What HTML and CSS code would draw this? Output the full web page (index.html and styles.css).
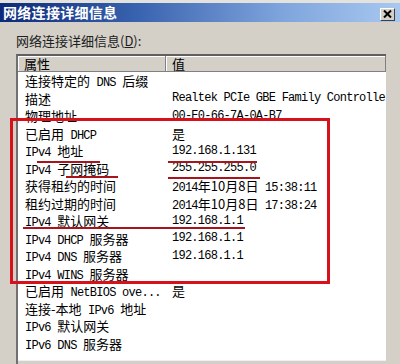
FILE: index.html
```html
<!DOCTYPE html>
<html lang="zh-CN">
<head>
	<meta charset="UTF-8">
	<title>网络连接详细信息</title>
	<link rel="stylesheet" href="styles.css">
</head>
<body>
	<div class="win">
		<header class="titlebar">
			<span class="title">网络连接详细信息</span>
			<span class="close">
				<svg width="9" height="8" viewBox="0 0 9 8"><path d="M1 0.5 L8 7.5 M8 0.5 L1 7.5" stroke="#000" stroke-width="2"/></svg>
			</span>
		</header>
		<div class="content">
			<div class="label">网络连接详细信息(<u>D</u>):</div>
			<div class="listbox">
				<div class="head">
					<div class="hcell k">属性</div>
					<div class="hcell">值</div>
				</div>
				<ul class="rows">
					<li><span class="k">连接特定的<span class="m"> DNS </span>后缀</span><span class="v"></span></li>
					<li><span class="k">描述</span><span class="v m">Realtek PCIe GBE Family Controller</span></li>
					<li><span class="k">物理地址</span><span class="v m">00-E0-66-7A-0A-B7</span></li>
					<li><span class="k">已启用<span class="m"> DHCP</span></span><span class="v">是</span></li>
					<li><span class="k"><span class="m">IPv4 </span>地址</span><span class="v m">192.168.1.131</span></li>
					<li><span class="k"><span class="m">IPv4 </span>子网掩码</span><span class="v m">255.255.255.0</span></li>
					<li><span class="k">获得租约的时间</span><span class="v"><span class="m">2014</span>年10月8日<span class="m"> 15:38:11</span></span></li>
					<li><span class="k">租约过期的时间</span><span class="v"><span class="m">2014</span>年10月8日<span class="m"> 17:38:24</span></span></li>
					<li><span class="k"><span class="m">IPv4 </span>默认网关</span><span class="v m">192.168.1.1</span></li>
					<li><span class="k"><span class="m">IPv4 DHCP </span>服务器</span><span class="v m">192.168.1.1</span></li>
					<li><span class="k"><span class="m">IPv4 DNS </span>服务器</span><span class="v m">192.168.1.1</span></li>
					<li><span class="k"><span class="m">IPv4 WINS </span>服务器</span><span class="v"></span></li>
					<li><span class="k">已启用<span class="m"> NetBIOS ove...</span></span><span class="v">是</span></li>
					<li><span class="k">连接-本地<span class="m"> IPv6 </span>地址</span><span class="v"></span></li>
					<li><span class="k"><span class="m">IPv6 </span>默认网关</span><span class="v"></span></li>
					<li><span class="k"><span class="m">IPv6 DNS </span>服务器</span><span class="v"></span></li>
				</ul>
				<div class="hscroll"></div>
			</div>
		</div>
	</div>
	<!-- hand drawn marks over the dialog -->
	<div class="mark box"></div>
	<div class="mark line l1"></div>
	<div class="mark line l2"></div>
	<div class="mark line l3"></div>
	<div class="mark line l4"></div>
	<div class="mark line l5"></div>
</body>
</html>
```

FILE: styles.css
```css
*{
	margin: 0;
	padding: 0;
	list-style: none;
	box-sizing: border-box;
}
body,html{
	width: 100%;
	height: 100%;
	overflow: hidden;
}
body{
	background: #d4d0c8;
	font-family: "Noto Sans CJK SC", sans-serif;
	font-size: 13px;
	color: #000;
	position: relative;
}
.win{
	display: flex;
	flex-direction: column;
	height: 364px;
}
.titlebar{
	height: 22px;
	border-top: 3px solid #e4e2dc;
	background: linear-gradient(to right, #0c2a78 0%, #3a64b0 35%, #7ea4dc 70%, #a8c8f0 100%);
	display: flex;
	align-items: center;
	justify-content: space-between;
	padding: 0 5px 0 3px;
}
.title{
	color: #fff;
	font-weight: bold;
	font-size: 14px;
	line-height: 19px;
	letter-spacing: 0.3px;
}
.close{
	width: 15px;
	height: 13px;
	margin-top: 3px;
	background: #d4d0c8;
	border-top: 1px solid #fff;
	border-left: 1px solid #fff;
	border-right: 1px solid #404040;
	border-bottom: 1px solid #404040;
	display: flex;
	align-items: center;
	justify-content: center;
}
.content{
	flex: 1;
	display: flex;
	flex-direction: column;
	padding: 11px 14px 0 16px;
	min-height: 0;
}
.label{
	line-height: 16px;
	height: 21px;
	color: #202020;
}
.label u{
	text-decoration: underline;
}
.listbox{
	flex: 1;
	background: #fff;
	border-top: 2px solid #606060;
	border-left: 2px solid #707070;
	display: flex;
	flex-direction: column;
	overflow: hidden;
	min-height: 0;
}
.head{
	display: flex;
	height: 16px;
	background: #d4d0c8;
	border-bottom: 1px solid #808080;
}
.hcell{
	padding-left: 6px;
	line-height: 15px;
	border-right: 1px solid #808080;
	box-shadow: inset 1px 1px #fff;
	flex: 1;
}
.hcell.k{
	flex: 0 0 148px;
}
.rows{
	height: 288px;
	overflow: hidden;
}
.rows li{
	display: flex;
	height: 17.5px;
	align-items: center;
	white-space: pre;
}
.rows .k{
	flex: 0 0 148px;
	padding-left: 7px;
}
.rows .v{
	flex: 1;
	padding-left: 6px;
	overflow: hidden;
}
.m{
	font-family: "Liberation Mono", monospace;
	font-size: 12px;
	letter-spacing: -0.75px;
}
.hscroll{
	flex: 1;
	background: #d4d0c8;
	border-top: 1px solid #f0f0f0;
}
.mark{
	position: absolute;
}
.box{
	left: 10px;
	top: 118px;
	width: 320px;
	height: 166px;
	border: 3px solid #d8101a;
}
.line{
	height: 2px;
	background: #a8141c;
}
.l1{ left: 37px; top: 161px; width: 63px; }
.l2{ left: 168px; top: 161px; width: 89px; }
.l3{ left: 66px; top: 176px; width: 52px; }
.l4{ left: 168px; top: 177px; width: 92px; }
.l5{ left: 23px; top: 227px; width: 222px; }
```
